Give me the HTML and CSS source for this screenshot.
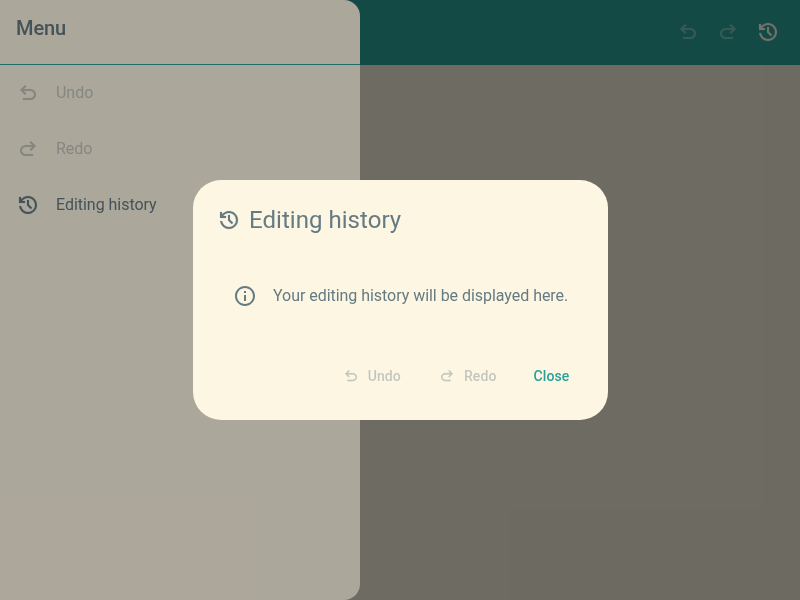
FILE: index.html
```html
<!DOCTYPE html>
<html lang="en">
<head>
<meta charset="utf-8">
<title>Editing history</title>
<link rel="stylesheet" href="styles.css">
</head>
<body>
<svg class="sprite" aria-hidden="true">
  <symbol id="undo" viewBox="0 -960 960 960"><path d="M280-200v-80h284q63 0 109.500-40T720-420q0-60-46.500-100T564-560H312l104 104-56 56-200-200 200-200 56 56-104 104h252q97 0 166.500 63T800-420q0 94-69.500 157T564-200H280Z"/></symbol>
  <symbol id="redo" viewBox="0 -960 960 960"><path d="M396-200q-97 0-166.500-63T160-420q0-94 69.500-157T396-640h252L544-744l56-56 200 200-200 200-56-56 104-104H396q-63 0-109.500 40T240-420q0 60 46.500 100T396-280h284v80H396Z"/></symbol>
  <symbol id="history" viewBox="0 -960 960 960"><path d="M480-120q-138 0-240.500-91.500T122-440h82q14 104 92.500 172T480-200q117 0 198.500-81.500T760-480q0-117-81.500-198.500T480-760q-69 0-129 32t-101 88h110v80H120v-240h80v94q51-64 124.500-99T480-840q75 0 140.500 28.500t114 77q48.500 48.500 77 114T840-480q0 75-28.500 140.500t-77 114q-48.500 48.500-114 77T480-120Zm112-192L440-464v-216h80v184l128 128-56 56Z"/></symbol>
  <symbol id="info" viewBox="0 0 24 24"><path d="M11 17h2v-6h-2v6zm1-15C6.480 2 2 6.480 2 12s4.480 10 10 10 10-4.480 10-10S17.520 2 12 2zm0 18c-4.410 0-8-3.590-8-8s3.590-8 8-8 8 3.590 8 8-3.590 8-8 8zM11 9h2V7h-2v2z"/></symbol>
</svg>
<header class="topbar">
  <svg class="icon bold disabled"><use href="#undo"/></svg>
  <svg class="icon bold disabled"><use href="#redo"/></svg>
  <svg class="icon bold"><use href="#history"/></svg>
</header>
<div class="scrim">
  <aside class="drawer">
    <h2 class="drawer-title">Menu</h2>
    <nav class="menu">
      <div class="item disabled"><svg class="icon bold"><use href="#undo"/></svg><span>Undo</span></div>
      <div class="item disabled"><svg class="icon bold"><use href="#redo"/></svg><span>Redo</span></div>
      <div class="item"><svg class="icon bold"><use href="#history"/></svg><span>Editing history</span></div>
    </nav>
  </aside>
</div>
<div class="scrim centered">
  <section class="dialog">
    <h1 class="dialog-title"><svg class="icon bold"><use href="#history"/></svg><span>Editing history</span></h1>
    <div class="message"><svg class="icon"><use href="#info"/></svg><span>Your editing history will be displayed here.</span></div>
    <div class="actions">
      <div class="button disabled"><svg class="icon bold small"><use href="#undo"/></svg><span>Undo</span></div>
      <div class="button disabled"><svg class="icon bold small"><use href="#redo"/></svg><span>Redo</span></div>
      <div class="button close">Close</div>
    </div>
  </section>
</div>
</body>
</html>
```
FILE: styles.css
```css
* { box-sizing: border-box; }
body {
  margin: 0;
  height: 100vh;
  overflow: hidden;
  background: #eee8d5;
  color: #657b83;
  font: 400 16px/24px Roboto, sans-serif;
}
h1, h2 { margin: 0; }
.sprite { position: absolute; width: 0; height: 0; }
.icon { width: 24px; height: 24px; flex: none; fill: currentColor; display: block; }
.icon.bold { stroke: currentColor; stroke-width: 5px; }
.icon.small { width: 18px; height: 18px; }
.disabled { opacity: 0.38; }
.topbar {
  height: 65px;
  padding: 0 20px 1px 0;
  display: flex;
  justify-content: flex-end;
  align-items: center;
  gap: 16px;
  background: #2aa198;
  color: #fdf6e3;
}
.scrim { position: fixed; inset: 0; background: rgba(0, 0, 0, 0.32); }
.drawer {
  width: 360px;
  height: 100%;
  background: #fdf6e3;
  border-radius: 0 16px 16px 0;
  overflow: hidden;
}
.drawer-title {
  height: 65px;
  padding: 16px;
  border-bottom: 1px solid #2aa198;
  font-size: 20px;
  font-weight: 500;
  letter-spacing: -0.1px;
}
.item {
  height: 56px;
  padding: 0 16px;
  display: flex;
  align-items: center;
  gap: 16px;
  letter-spacing: -0.03px;
}
.centered { display: flex; align-items: center; justify-content: center; }
.dialog {
  width: 415px;
  height: 240px;
  padding: 24px 23px 24px 24px;
  border-radius: 28px;
  background: #fdf6e3;
}
.dialog-title {
  height: 32px;
  display: flex;
  align-items: center;
  gap: 8.5px;
  font-size: 24px;
  font-weight: 400;
  line-height: 32px;
  letter-spacing: 0.04px;
}
.message {
  height: 56px;
  margin-top: 32px;
  padding: 0 16px;
  display: flex;
  align-items: center;
  gap: 16.5px;
  white-space: nowrap;
  letter-spacing: -0.04px;
}
.actions { margin-top: 32px; display: flex; justify-content: flex-end; gap: 8px; }
.button {
  height: 40px;
  padding: 0 15px 0 14px;
  display: flex;
  align-items: center;
  gap: 8px;
  font-size: 14px;
  font-weight: 500;
  line-height: 20px;
  letter-spacing: 0.12px;
}
.close { color: #2aa198; }
```
